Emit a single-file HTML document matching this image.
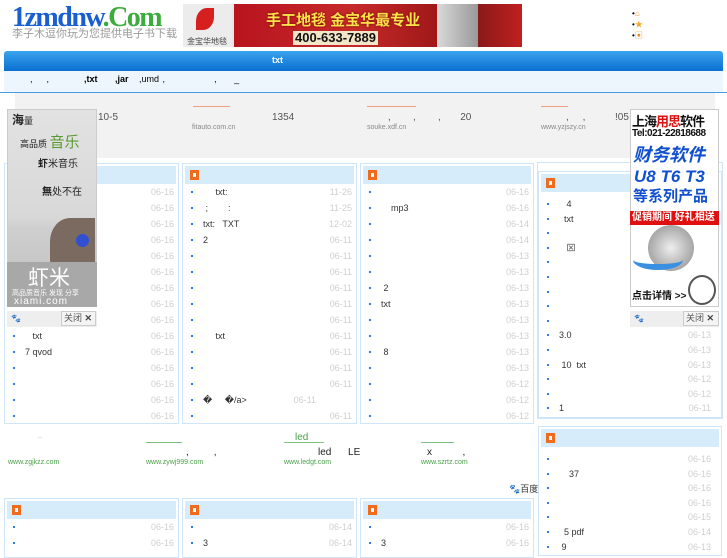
<!DOCTYPE html>
<html><head><meta charset="utf-8">
<style>
*{margin:0;padding:0;box-sizing:border-box}
body{width:727px;height:545px;overflow:hidden;position:relative;background:#fff;font-family:"Liberation Sans","Noto Sans CJK SC",sans-serif;font-size:9px;color:#333}
.a{position:absolute}
.box{position:absolute;border:1px solid #cfe6fa;background:#fff}
.hd{position:absolute;left:2px;right:2px;top:2px;height:18px;background:#d6ecfb}
.ic{position:absolute;left:5px;top:4px;width:9px;height:10px;background:#f26a1b}
.ic:after{content:"";position:absolute;left:3px;top:3px;width:3px;height:4px;background:#fff}
ul{list-style:none;position:absolute;left:0;right:0}
li{position:relative;height:16px;line-height:16px;padding-left:20px;white-space:nowrap}
li:before{content:"";position:absolute;left:8px;top:7px;width:2px;height:2px;background:#2a7fe0}
li i{font-style:normal;position:absolute;right:4px;color:#cfcfcf}
.s li{height:14.6px;line-height:14.6px}
.s li:before{top:6px}
</style></head><body>
<!-- header -->
<div class="a" style="left:12px;top:3px;font-family:'Liberation Serif',serif;font-weight:bold;font-size:28px;letter-spacing:-1.5px;color:#1a5fd0;line-height:30px">1zmdnw<span style="color:#3dab3d">.Com</span></div>
<div class="a" style="left:12px;top:28px;font-size:11px;color:#9a9a9a;line-height:12px">李子木逗你玩为您提供电子书下载</div>
<div class="a" style="left:183px;top:4px;width:339px;height:43px;background:linear-gradient(90deg,#e8e8e8 0,#e8e8e8 15%,#b8141e 15%,#c52a2a 50%,#a01818 75%,#d9d9d9 75%,#999 87%,#8a1a1a 87%,#c02020 100%)"></div>
<div class="a" style="left:183px;top:4px;width:49px;height:43px;background:#ececec"></div>
<div class="a" style="left:196px;top:8px;width:18px;height:22px;background:#d62020;border-radius:60% 0 60% 0"></div>
<div class="a" style="left:187px;top:36px;font-size:8px;color:#444">金宝华地毯</div>
<div class="a" style="left:266px;top:9px;font-size:15px;font-weight:bold;color:#ffe34a;text-shadow:0 0 2px #700">手工地毯 金宝华最专业</div>
<div class="a" style="left:293px;top:31px;font-size:13px;font-weight:bold;color:#111;background:#f3e6c8;padding:0 2px;line-height:14px">400-633-7889</div>
<div class="a" style="left:632px;top:8px;font-size:8px;line-height:11px;color:#000">•<span style="color:#f08a24">⌂</span><br>•<span style="color:#f5a623">★</span><br>•<span style="color:#f08a24">▣</span></div>
<!-- nav -->
<div class="a" style="left:4px;top:51px;width:719px;height:20px;background:linear-gradient(#3aa3ee,#0a6fcf);border-radius:3px 3px 0 0"></div>
<div class="a" style="left:272px;top:55px;color:#fff;font-weight:bold;font-size:9px">txt</div>
<div class="a" style="left:4px;top:71px;width:719px;height:21px;background:#eef6fd"></div>
<div class="a" style="left:0;top:92px;width:727px;height:1px;background:#4a9be6"></div>
<div class="a" style="left:30px;top:74px;font-size:9px;color:#000;word-spacing:1px">,&nbsp;&nbsp;&nbsp; ,&nbsp;&nbsp;&nbsp;&nbsp;&nbsp;&nbsp;&nbsp;&nbsp;&nbsp; <b>,txt</b>&nbsp;&nbsp;&nbsp;&nbsp; <b>,jar</b>&nbsp;&nbsp; ,umd ,&nbsp;&nbsp;&nbsp;&nbsp;&nbsp;&nbsp;&nbsp;&nbsp;&nbsp;&nbsp;&nbsp;&nbsp;&nbsp; ,&nbsp;&nbsp;&nbsp;&nbsp; _</div>
<!-- gray ad area -->
<div class="a" style="left:15px;top:93px;width:700px;height:65px;background:#f2f2f2"></div>
<div class="a" style="left:193px;top:106px;width:37px;height:1px;background:#f0a080"></div>
<div class="a" style="left:367px;top:106px;width:49px;height:1px;background:#f0a080"></div>
<div class="a" style="left:541px;top:106px;width:27px;height:1px;background:#f0a080"></div>
<div class="a" style="left:98px;top:112px;font-size:10px;color:#555">10-5</div>
<div class="a" style="left:272px;top:112px;font-size:10px;color:#555">1354</div>
<div class="a" style="left:388px;top:112px;font-size:10px;color:#555">,&nbsp;&nbsp;&nbsp;&nbsp;&nbsp;&nbsp;&nbsp; ,&nbsp;&nbsp;&nbsp;&nbsp;&nbsp;&nbsp;&nbsp; ,&nbsp;&nbsp;&nbsp;&nbsp;&nbsp;&nbsp; 20</div>
<div class="a" style="left:566px;top:112px;font-size:10px;color:#555">,&nbsp;&nbsp;&nbsp;&nbsp; ,</div>
<div class="a" style="left:615px;top:112px;font-size:10px;color:#555">!05</div>
<div class="a" style="left:192px;top:124px;font-size:7px;color:#888">fitauto.com.cn</div>
<div class="a" style="left:367px;top:124px;font-size:7px;color:#888">souke.xdf.cn</div>
<div class="a" style="left:541px;top:124px;font-size:7px;color:#888">www.yzjszy.cn</div>

<!-- col1 -->
<div class="box" style="left:4px;top:163px;width:175px;height:261px"><div class="hd"></div>
<ul style="top:20px"><li><i>06-16</i></li><li><i>06-16</i></li><li><i>06-16</i></li><li><i>06-16</i></li><li><i>06-16</i></li><li><i>06-16</i></li><li><i>06-16</i></li><li><i>06-16</i></li><li><i>06-16</i></li><li>&nbsp;&nbsp;&nbsp;txt<i>06-16</i></li><li>7 qvod<i>06-16</i></li><li><i>06-16</i></li><li><i>06-16</i></li><li><i>06-16</i></li><li><i>06-16</i></li></ul></div>
<!-- col2 -->
<div class="box" style="left:182px;top:163px;width:175px;height:261px"><div class="hd"><div class="ic"></div></div>
<ul style="top:20px"><li>&nbsp;&nbsp;&nbsp;&nbsp;&nbsp;txt:<i>11-26</i></li><li>&nbsp;;&nbsp;&nbsp;&nbsp;&nbsp;&nbsp;&nbsp;&nbsp; :<i>11-25</i></li><li>txt:&nbsp;&nbsp; TXT<i>12-02</i></li><li>2<i>06-11</i></li><li><i>06-11</i></li><li><i>06-11</i></li><li><i>06-11</i></li><li><i>06-11</i></li><li><i>06-11</i></li><li>&nbsp;&nbsp;&nbsp;&nbsp;&nbsp;txt<i>06-11</i></li><li><i>06-11</i></li><li><i>06-11</i></li><li><i>06-11</i></li><li>�&nbsp;&nbsp;&nbsp;&nbsp; �/a&gt;<i style="right:40px">06-11</i></li><li><i>06-11</i></li></ul></div>
<!-- col3 -->
<div class="box" style="left:360px;top:163px;width:174px;height:261px"><div class="hd"><div class="ic"></div></div>
<ul style="top:20px"><li><i>06-16</i></li><li>&nbsp;&nbsp;&nbsp;&nbsp;mp3<i>06-16</i></li><li><i>06-14</i></li><li><i>06-14</i></li><li><i>06-13</i></li><li><i>06-13</i></li><li>&nbsp;2<i>06-13</i></li><li>txt<i>06-13</i></li><li><i>06-13</i></li><li><i>06-13</i></li><li>&nbsp;8<i>06-13</i></li><li><i>06-13</i></li><li><i>06-12</i></li><li><i>06-12</i></li><li><i>06-12</i></li></ul></div>
<!-- col4 -->
<div class="box" style="left:537px;top:162px;width:186px;height:257px;border-top-color:#cfe6fa"></div>
<div class="box s" style="left:538px;top:171px;width:184px;height:247px"><div class="hd"><div class="ic"></div></div>
<ul style="top:25px"><li>&nbsp;&nbsp;&nbsp;4</li><li>&nbsp;&nbsp;txt</li><li></li><li>&nbsp;&nbsp;&nbsp;⊠</li><li></li><li></li><li></li><li></li><li></li><li>3.0<i style="right:10px">06-13</i></li><li><i style="right:10px">06-13</i></li><li>&nbsp;10&nbsp; txt<i style="right:10px">06-13</i></li><li><i style="right:10px">06-12</i></li><li><i style="right:10px">06-12</i></li><li>1<i style="right:10px">06-11</i></li></ul></div>
<!-- col5 -->
<div class="box s" style="left:538px;top:426px;width:184px;height:130px"><div class="hd"><div class="ic"></div></div>
<ul style="top:25px"><li><i style="right:10px">06-16</i></li><li>&nbsp;&nbsp;&nbsp;&nbsp;37<i style="right:10px">06-16</i></li><li><i style="right:10px">06-16</i></li><li><i style="right:10px">06-16</i></li><li><i style="right:10px">06-15</i></li><li>&nbsp;&nbsp;5 pdf<i style="right:10px">06-14</i></li><li>&nbsp;9<i style="right:10px">06-13</i></li></ul></div>

<!-- bottom links -->
<div class="a" style="left:38px;top:433px;font-size:7px;color:#999">..</div>
<div class="a" style="left:146px;top:442px;width:36px;height:1px;background:#7fbf7f"></div>
<div class="a" style="left:284px;top:442px;width:40px;height:1px;background:#7fbf7f"></div>
<div class="a" style="left:295px;top:432px;font-size:10px;color:#4aa04a">led</div>
<div class="a" style="left:421px;top:442px;width:33px;height:1px;background:#7fbf7f"></div>
<div class="a" style="left:186px;top:447px;font-size:10px;color:#222">,&nbsp;&nbsp;&nbsp;&nbsp;&nbsp;&nbsp;&nbsp;&nbsp; ,</div>
<div class="a" style="left:318px;top:447px;font-size:10px;color:#222">led&nbsp;&nbsp;&nbsp;&nbsp;&nbsp; LE</div>
<div class="a" style="left:427px;top:447px;font-size:10px;color:#222">x&nbsp;&nbsp;&nbsp;&nbsp;&nbsp;&nbsp;&nbsp;&nbsp;&nbsp;&nbsp; ,</div>
<div class="a" style="left:8px;top:459px;font-size:7px;color:#4aa04a">www.zgjkzz.com</div>
<div class="a" style="left:146px;top:459px;font-size:7px;color:#4aa04a">www.zywj999.com</div>
<div class="a" style="left:284px;top:459px;font-size:7px;color:#4aa04a">www.ledgt.com</div>
<div class="a" style="left:421px;top:459px;font-size:7px;color:#4aa04a">www.szrtz.com</div>
<div class="a" style="left:509px;top:482px;font-size:9px;color:#333"><span style="color:#2a4fd0">🐾</span>百度</div>

<!-- bottom boxes -->
<div class="box" style="left:4px;top:498px;width:175px;height:60px"><div class="hd"><div class="ic"></div></div><ul style="top:20px"><li><i>06-16</i></li><li><i>06-16</i></li></ul></div>
<div class="box" style="left:182px;top:498px;width:175px;height:60px"><div class="hd"><div class="ic"></div></div><ul style="top:20px"><li><i>06-14</i></li><li>3<i>06-14</i></li></ul></div>
<div class="box" style="left:360px;top:498px;width:174px;height:60px"><div class="hd"><div class="ic"></div></div><ul style="top:20px"><li><i>06-16</i></li><li>3<i>06-16</i></li></ul></div>

<!-- left ad -->
<div class="a" style="left:7px;top:109px;width:90px;height:198px;background:linear-gradient(#e2e2e2,#d8d8d8 55%,#cfcfcf 60%,#bdbdbd 100%);border:1px solid #ccc"></div>
<div class="a" style="left:12px;top:113px;font-size:12px;line-height:14px;color:#222;font-weight:bold">海<span style="font-size:9px;font-weight:normal">量</span></div>
<div class="a" style="left:20px;top:131px;font-size:9px;color:#222">高品质 <span style="font-size:15px;color:#5a9a30">音乐</span></div>
<div class="a" style="left:38px;top:155px;font-size:10px;color:#222"><b>虾</b>米音乐</div>
<div class="a" style="left:42px;top:183px;font-size:10px;color:#222"><b>無</b>处不在</div>
<div class="a" style="left:50px;top:218px;width:45px;height:52px;background:#7a6a60;border-radius:45% 0 0 20%"></div>
<div class="a" style="left:76px;top:234px;width:13px;height:13px;background:#3050d0;border-radius:50%"></div>
<div class="a" style="left:7px;top:262px;width:90px;height:45px;background:#a8a8a8"></div>
<div class="a" style="left:28px;top:262px;font-size:21px;color:#fff">虾米</div>
<div class="a" style="left:12px;top:288px;font-size:7px;color:#fff">高品质音乐 发现 分享</div>
<div class="a" style="left:14px;top:296px;font-size:10px;color:#fff;letter-spacing:1px">xiami.com</div>
<div class="a" style="left:7px;top:311px;width:90px;height:16px;background:#eee"></div>
<div class="a" style="left:11px;top:314px;font-size:8px;color:#888">🐾</div>
<div class="a" style="left:61px;top:311px;width:35px;height:15px;background:#f4f4f4;border:1px solid #ccc;font-size:9px;line-height:13px;padding-left:2px;color:#555">关闭 <b style="color:#444">✕</b></div>

<!-- right ad -->
<div class="a" style="left:630px;top:109px;width:89px;height:198px;background:#fff;border:1px solid #ccc"></div>
<div class="a" style="left:632px;top:111px;font-size:13px;font-weight:bold;color:#111;letter-spacing:-1px">上海<span style="color:#e01010">用思</span>软件</div>
<div class="a" style="left:632px;top:128px;font-size:10px;font-weight:bold;color:#111;letter-spacing:-.5px">Tel:021-22818688</div>
<div class="a" style="left:633px;top:145px;font-size:18px;font-weight:bold;font-style:italic;color:#1050d0;line-height:20px">财务软件</div>
<div class="a" style="left:634px;top:167px;font-size:17px;font-weight:bold;font-style:italic;color:#1050d0;line-height:20px">U8 T6 T3</div>
<div class="a" style="left:633px;top:188px;font-size:15px;font-weight:bold;color:#1050d0;line-height:18px">等系列产品</div>
<div class="a" style="left:630px;top:211px;width:89px;height:14px;background:#e01010;color:#fff;font-size:10px;font-weight:bold;line-height:14px;padding-left:2px">促销期间 好礼相送</div>
<div class="a" style="left:648px;top:225px;width:46px;height:46px;border-radius:50%;background:radial-gradient(#eee,#888)"></div>
<div class="a" style="left:633px;top:250px;width:50px;height:20px;border-bottom:6px solid #3a90e0;border-radius:0 0 50% 50%"></div>
<div class="a" style="left:688px;top:275px;width:28px;height:30px;border-radius:50%;border:2px solid #555;background:#fff"></div>
<div class="a" style="left:632px;top:287px;font-size:10px;font-weight:bold;color:#111">点击详情 &gt;&gt;</div>
<div class="a" style="left:630px;top:311px;width:89px;height:16px;background:#eee"></div>
<div class="a" style="left:634px;top:314px;font-size:8px;color:#888">🐾</div>
<div class="a" style="left:683px;top:311px;width:36px;height:15px;background:#f4f4f4;border:1px solid #ccc;font-size:9px;line-height:13px;padding-left:2px;color:#555">关闭 <b style="color:#444">✕</b></div>
</body></html>
